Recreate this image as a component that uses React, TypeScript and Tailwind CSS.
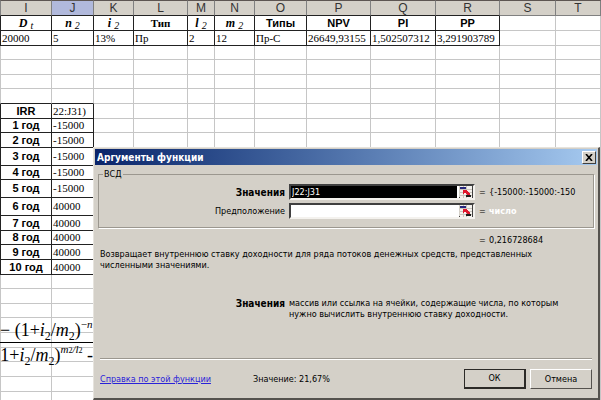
import { ReactNode } from "react";

type SheetRow = {
  height: string;
  label?: string;
  value?: string;
};

type VarProps = {
  name: string;
  sub: string;
};

const columns = [
  { name: "I", width: "w-[52px]" },
  { name: "J", width: "w-[42px]" },
  { name: "K", width: "w-[40px]" },
  { name: "L", width: "w-[54px]" },
  { name: "M", width: "w-[27px]" },
  { name: "N", width: "w-[40px]" },
  { name: "O", width: "w-[52px]" },
  { name: "P", width: "w-[64px]" },
  { name: "Q", width: "w-[65px]" },
  { name: "R", width: "w-[64px]" },
  { name: "S", width: "w-[56px]" },
  { name: "T", width: "" },
];

const VarName = ({ name, sub }: VarProps) => (
  <span className="flex h-[13px] items-center justify-center gap-[3px] font-['Liberation_Serif',serif] text-[12px] leading-[13px] italic">
    {name}
    <span className="pt-1 text-[10px] leading-[9px] font-normal">{sub}</span>
  </span>
);

const titles: ReactNode[] = [
  <VarName name="D" sub="t" />,
  <VarName name="n" sub="2" />,
  <VarName name="i" sub="2" />,
  <span className="block font-['Liberation_Serif',serif]">Тип</span>,
  <VarName name="l" sub="2" />,
  <VarName name="m" sub="2" />,
  "Типы",
  "NPV",
  "PI",
  "PP",
];

const values = [
  "20000",
  "5",
  "13%",
  "Пр",
  "2",
  "12",
  "Пр-С",
  "26649,93155",
  "1,502507312",
  "3,291903789",
];

const rows: SheetRow[] = [
  { height: "h-[14px]" },
  { height: "h-[15px]" },
  { height: "h-[14px]" },
  { height: "h-[15px]" },
  { height: "h-[15px]", label: "IRR", value: "22:J31)" },
  { height: "h-[14px]", label: "1 год", value: "-15000" },
  { height: "h-[15px]", label: "2 год", value: "-15000" },
  { height: "h-[18px]", label: "3 год", value: "-15000" },
  { height: "h-[14px]", label: "4 год", value: "-15000" },
  { height: "h-[18px]", label: "5 год", value: "-15000" },
  { height: "h-[18px]", label: "6 год", value: "40000" },
  { height: "h-[15px]", label: "7 год", value: "40000" },
  { height: "h-[14px]", label: "8 год", value: "40000" },
  { height: "h-[15px]", label: "9 год", value: "40000" },
  { height: "h-[15px]", label: "10 год", value: "40000" },
  { height: "h-[14px]" },
  { height: "h-[15px]" },
  { height: "h-[14px]" },
  { height: "h-[15px]" },
  { height: "h-[15px]" },
  { height: "h-[14px]" },
  { height: "h-[15px]" },
  { height: "h-[15px]" },
  { height: "h-[15px]" },
];

const cell = "border-r border-b p-0 whitespace-nowrap overflow-hidden";
const light = "border-[#c6c6c6]";
const dark = "border-[#222222]";
const titleCell = "text-center text-[11px] leading-[13px] font-bold";
const valueCell =
  "pl-px text-left font-['Liberation_Serif',serif] text-[11px] leading-[13px]";

const Sheet = () => (
  <table className="w-full table-fixed border-separate border-spacing-0 text-black">
    <colgroup>
      {columns.map((col) => (
        <col key={col.name} className={col.width} />
      ))}
    </colgroup>
    <thead>
      <tr className="h-4">
        {columns.map((col, index) => (
          <th
            key={col.name}
            className={`border-t border-r border-b border-t-[#5d5552] p-0 text-[12px] leading-[14px] font-normal text-[#333333] ${
              col.name === "J" ? "bg-[#b1b9dc]" : "bg-[#d4d0c8]"
            } ${index < 10 ? "border-b-[#222222]" : "border-b-[#808080]"} ${
              index === 0 ? "border-l border-l-[#808080]" : ""
            } border-r-[#808080]`}
          >
            {col.name}
          </th>
        ))}
      </tr>
    </thead>
    <tbody>
      <tr className="h-[15px]">
        {columns.map((col, index) => (
          <td
            key={col.name}
            className={`${cell} ${titleCell} ${index < 10 ? dark : light} ${
              index === 0 ? "border-l" : ""
            }`}
          >
            {titles[index]}
          </td>
        ))}
      </tr>
      <tr className="h-[15px]">
        {columns.map((col, index) => (
          <td
            key={col.name}
            className={`${cell} ${valueCell} ${index < 10 ? dark : light} ${
              index === 0 ? "border-l" : ""
            }`}
          >
            {values[index]}
          </td>
        ))}
      </tr>
      {rows.map((row, rowIndex) => {
        // the row above a filled one draws its top line
        const line = row.label || rows[rowIndex + 1]?.label;
        return (
          <tr key={rowIndex} className={row.height}>
            {columns.map((col, index) => {
              const filled = index < 2 && row.label;
              return (
                <td
                  key={col.name}
                  className={`${cell} ${
                    filled ? "border-r-[#222222]" : "border-r-[#c6c6c6]"
                  } ${
                    index < 2 && line
                      ? "border-b-[#222222]"
                      : "border-b-[#c6c6c6]"
                  } ${index === 0 ? "border-l" : ""} ${
                    filled ? "border-l-[#222222]" : "border-l-[#c6c6c6]"
                  } ${index === 1 ? valueCell : titleCell}`}
                >
                  {index === 0 ? row.label : index === 1 ? row.value : null}
                </td>
              );
            })}
          </tr>
        );
      })}
    </tbody>
  </table>
);

const Sub = () => <sub className="bottom-[-4px] text-[12px] not-italic">2</sub>;

// equation object that floats over the cells
const Formula = () => (
  <div className="absolute top-[318px] left-0 w-[93px] overflow-hidden font-['Liberation_Serif',serif] text-[18px] leading-[24px] whitespace-nowrap text-black">
    <div className="border-b border-black">
      − (1+<i>i</i>
      <Sub />/<i>m</i>
      <Sub />)<sup className="top-[-8px] text-[11px]">−<i>n</i></sup>
    </div>
    <div className="flex justify-end">
      <span>
        1+<i>i</i>
        <Sub />/<i>m</i>
        <Sub />)
        <sup className="top-[-8px] text-[11px] italic">
          m<span className="text-[8px] not-italic">2</span>/l
          <span className="text-[8px] not-italic">2</span>
        </sup>{" "}
        -
      </span>
    </div>
  </div>
);

const RefIcon = () => (
  <svg viewBox="0 0 13 13" className="h-3 w-[13px]" shapeRendering="crispEdges">
    <rect width="13" height="13" fill="#f4f2ee" />
    <path d="M0 4h13M0 7h13M0 10h13M4 0v13M8 0v13" stroke="#c5c1ba" />
    <rect x="1" y="1" width="6" height="2" fill="#26267c" />
    <path d="M4 4h5L8 5l4 4-2 2-4-4-2 2z" fill="#e0182d" />
    <rect x="7" y="10" width="5" height="2" fill="#1c1c1c" />
  </svg>
);

type ArgProps = {
  id: string;
  label: string;
  value: string;
  bold?: boolean;
  children: ReactNode;
};

const Argument = ({ id, label, value, bold, children }: ArgProps) => (
  <div className="flex h-4 items-center">
    <label
      htmlFor={id}
      className={`w-[186px] shrink-0 text-right ${
        bold ? "text-[10px] font-bold" : ""
      }`}
    >
      {label}
    </label>
    <div className="ml-1 flex h-4 min-w-0 flex-1 border-2 border-t-[#404040] border-r-[#f4f2ee] border-b-[#f4f2ee] border-l-[#404040] bg-white">
      <input
        id={id}
        type="text"
        defaultValue={value}
        className={`h-3 min-w-0 flex-1 px-px outline-none ${
          value ? "mr-0.5 bg-black text-white" : "bg-white"
        }`}
      />
      <button
        type="button"
        aria-label={`Свернуть: ${label}`}
        className="flex h-3 w-[14px] shrink-0 border-r border-b border-[#404040] bg-[#d4d0c8]"
      >
        <RefIcon />
      </button>
    </div>
    <span className="ml-1 w-[10px] shrink-0">=</span>
    <span className="w-[86px] shrink-0 whitespace-nowrap">{children}</span>
  </div>
);

const Dialog = () => (
  <div
    role="dialog"
    aria-labelledby="dialog-title"
    className="absolute top-[147px] right-px left-[93px] border-t border-r-2 border-b-2 border-l border-t-[#e6e3dd] border-r-[#55524e] border-b-[#55524e] border-l-[#e6e3dd] bg-[#d4d0c8] p-px font-['DejaVu_Sans_Condensed','DejaVu_Sans',sans-serif] text-[9px] leading-[11px] text-black"
  >
    <div className="flex h-4 items-center justify-between bg-linear-to-r from-[#0a246a] to-[#a6caf0] pr-px pl-0.5">
      <h1 id="dialog-title" className="text-[10px] font-bold text-white">
        Аргументы функции
      </h1>
      <button
        type="button"
        aria-label="Закрыть"
        className="flex h-[13px] w-[14px] items-center justify-center border border-t-white border-r-[#404040] border-b-[#404040] border-l-white bg-[#d4d0c8]"
      >
        <svg viewBox="0 0 8 7" className="h-[7px] w-2">
          <path d="M1 0l6 7M7 0L1 7" stroke="black" strokeWidth="1.6" />
        </svg>
      </button>
    </div>
    <div className="px-[5px] pt-1 pb-2">
      <fieldset className="mx-[-2px] min-w-0 border border-[#9b978f] pr-[18px] pb-2 shadow-[1px_1px_0_white]">
        <legend className="ml-1 px-px">ВСД</legend>
        <div className="flex flex-col gap-[3px] pt-1">
          <Argument id="values" label="Значения" value="J22:J31" bold>
            {"{-15000:-15000:-150"}
          </Argument>
          <Argument id="guess" label="Предположение" value="">
            <span className="font-bold text-white">число</span>
          </Argument>
        </div>
      </fieldset>
      <div className="mt-[7px] flex justify-end pr-[17px]">
        <span className="w-[10px]">=</span>
        <span className="w-[86px]">0,216728684</span>
      </div>
      <p className="mt-[3px] mr-10">
        Возвращает внутреннюю ставку доходности для ряда потоков денежных
        средств, представленных численными значениями.
      </p>
      <div className="mt-[27px] flex gap-1">
        <b className="w-[185px] shrink-0 text-right text-[10px]">Значения</b>
        <p className="mr-5">
          массив или ссылка на ячейки, содержащие числа, по которым нужно
          вычислить внутреннюю ставку доходности.
        </p>
      </div>
      <hr className="mt-[38px] border-t border-[#9b978f] shadow-[0_1px_0_white]" />
      <div className="mt-[10px] flex items-center">
        <a href="#help" className="w-[153px] text-[#2a22d8] underline">
          Справка по этой функции
        </a>
        <span className="flex-1">Значение: 21,67%</span>
        <button
          type="button"
          className="mr-1 h-5 w-[62px] border border-r-2 border-b-2 border-[#2c2a27] bg-[#d4d0c8]"
        >
          ОК
        </button>
        <button
          type="button"
          className="h-5 w-[62px] border border-t-white border-r-[#55524e] border-b-[#55524e] border-l-white bg-[#d4d0c8]"
        >
          Отмена
        </button>
      </div>
    </div>
  </div>
);

const App = () => {
  return (
    <main className="relative h-screen overflow-hidden bg-white font-['Liberation_Sans',sans-serif]">
      <Sheet />
      <Formula />
      <Dialog />
    </main>
  );
};

export default App;
